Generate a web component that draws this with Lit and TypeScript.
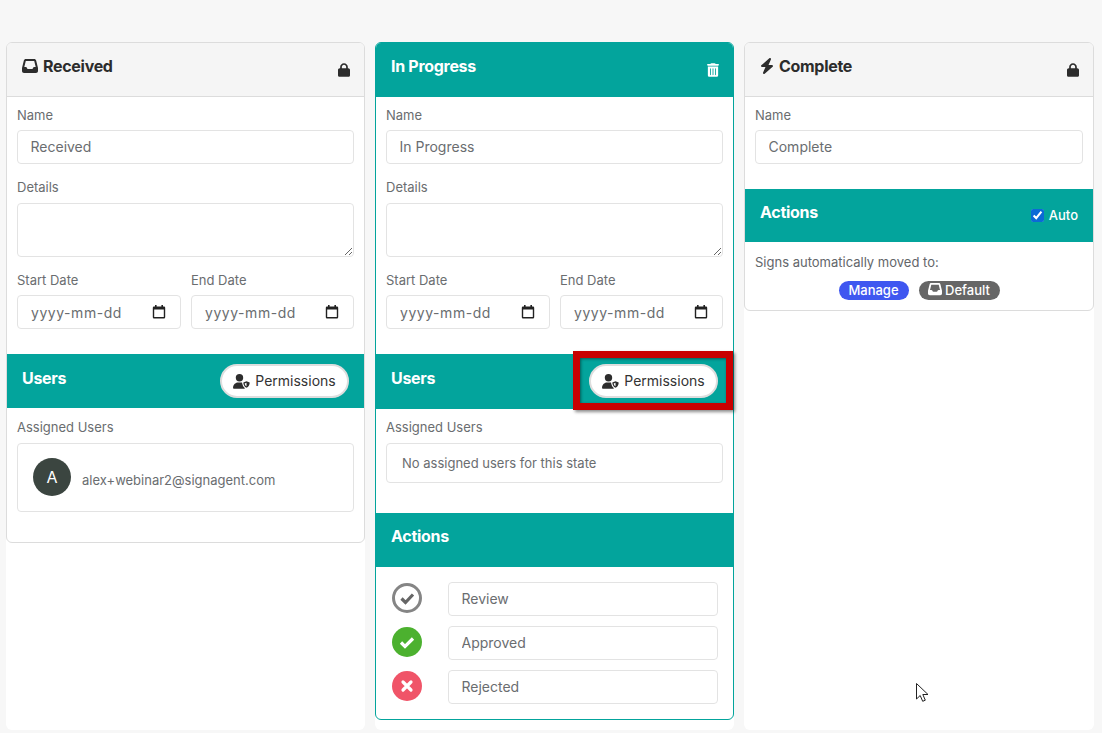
import { LitElement, html, css, svg } from "lit";
import { customElement } from "lit/decorators.js";

const inbox = svg`<path d="M121 32C91.6 32 66 52 58.9 80.5L1.9 308.4C.6 313.5 0 318.7 0 323.9V416c0 35.3 28.7 64 64 64H448c35.3 0 64-28.7 64-64V323.9c0-5.2-.6-10.4-1.9-15.5l-57-227.9C446 52 420.4 32 391 32H121zm0 64H391l48 192H387.8c-12.1 0-23.2 6.8-28.6 17.7l-14.3 28.6c-5.4 10.8-16.5 17.7-28.6 17.7H195.8c-12.1 0-23.2-6.8-28.6-17.7l-14.3-28.6c-5.4-10.8-16.5-17.7-28.6-17.7H73L121 96z"/>`;
const inboxIcon = (cls: string) => html`<svg class=${cls} viewBox="0 0 512 512" fill="currentColor">${inbox}</svg>`;
const lockIcon = html`<svg class="end-icon" viewBox="0 0 448 512" fill="currentColor"><path d="M144 144v48H304V144c0-44.2-35.8-80-80-80s-80 35.8-80 80zM80 192V144C80 64.5 144.5 0 224 0s144 64.5 144 144v48h16c35.3 0 64 28.7 64 64V448c0 35.3-28.7 64-64 64H64c-35.3 0-64-28.7-64-64V256c0-35.3 28.7-64 64-64H80z"/></svg>`;
const trashIcon = html`<svg class="end-icon" viewBox="0 0 448 512" fill="currentColor"><path d="M135.2 17.7C140.6 6.8 151.7 0 163.8 0H284.2c12.1 0 23.2 6.8 28.6 17.7L320 32h96c17.7 0 32 14.3 32 32s-14.3 32-32 32H32C14.3 96 0 81.7 0 64S14.3 32 32 32h96l7.2-14.3zM32 128H416V448c0 35.3-28.7 64-64 64H96c-35.3 0-64-28.7-64-64V128zm96 64c-8.8 0-16 7.2-16 16V432c0 8.8 7.2 16 16 16s16-7.2 16-16V208c0-8.8-7.2-16-16-16zm96 0c-8.8 0-16 7.2-16 16V432c0 8.8 7.2 16 16 16s16-7.2 16-16V208c0-8.8-7.2-16-16-16zm96 0c-8.8 0-16 7.2-16 16V432c0 8.8 7.2 16 16 16s16-7.2 16-16V208c0-8.8-7.2-16-16-16z"/></svg>`;
const boltIcon = html`<svg class="title-icon bolt" viewBox="0 0 448 512" fill="currentColor"><path d="M349.4 44.6c5.9-13.7 1.5-29.7-10.6-38.5s-28.6-8-39.9 1.8l-256 224c-10 8.8-13.6 22.9-8.9 35.3S50.7 288 64 288H175.5L98.6 467.4c-5.9 13.7-1.5 29.7 10.6 38.5s28.6 8 39.9-1.8l256-224c10-8.8 13.6-22.9 8.9-35.3s-16.6-20.7-30-20.7H272.5L349.4 44.6z"/></svg>`;
const calIcon = html`<svg class="cal" viewBox="0 0 14 14"><path fill="#222" d="M3 0h1.6v1.5h4.8V0H11v1.5h1a1.2 1.2 0 0 1 1.2 1.2v9.6A1.2 1.2 0 0 1 12 13.5H2A1.2 1.2 0 0 1 .8 12.300V2.700A1.200 1.200 0 0 1 2 1.500h1zM2.200 4.600v7.500h9.600V4.600z"/></svg>`;
const userShield = html`<svg class="ushield" viewBox="0 0 18 15"><circle cx="6.500" cy="3.800" r="3.700" fill="#2d2d2d"/><path fill="#2d2d2d" d="M0 14c0-3.300 2.200-5.600 5-5.600h3c1.500 0 2.800.6 3.700 1.600v4.800H1c-.6 0-1-.3-1-.8z"/><path fill="#fff" d="M13.500 6l4.500 1.600c0 3.600-1.500 6.300-4.500 7.400-3-1.100-4.500-3.800-4.500-7.400z"/><path fill="#2d2d2d" d="M13.500 7.300l3.200 1.100c-.1 2.600-1.200 4.400-3.200 5.300-2-.9-3.100-2.700-3.200-5.300z"/><path fill="#fff" d="M13.500 8.700v3.600c-1-.6-1.600-1.600-1.800-2.900z"/></svg>`;

@customElement("app-root")
export class AppRoot extends LitElement {
  static styles = css`
    :host { display: block; background: #f7f7f7; height: 733px; overflow: hidden; font-family: Inter, "Liberation Sans", sans-serif; color: #6a6d70; position: relative; }
    * { box-sizing: border-box; }
    .board { display: grid; grid-template-columns: 359px 359px 350px; gap: 10px; padding: 42px 0 0 6px; }
    .column { background: #fff; height: 688px; border-radius: 6px; }
    .card { border: 1px solid #dcdcdc; border-radius: 6px; background: #fff; overflow: hidden; }
    .card.active { border-color: #03a49c; }
    .card.one { height: 501px; }
    .card.two { height: 678px; }
    .card.three { height: 269px; }
    .head { height: 54px; background: #f5f5f5; border-bottom: 1px solid #dcdcdc; display: flex; justify-content: space-between; padding: 0 14px 0 15px; color: #2c2c2c; }
    .head .title { padding-top: 13px; }
    .active .head { background: #03a49c; color: #fff; border-bottom: 0; }
    .title { font-size: 16px; font-weight: 700; letter-spacing: -0.3px; line-height: 20px; padding-top: 14px; display: flex; align-items: flex-start; gap: 5px; }
    .title-icon { width: 16px; height: 16px; margin-top: 2px; }
    .bolt { width: 14px; }
    .end-icon { width: 12px; height: 14px; margin-top: 20px; }
    .body { padding: 8px 10px 0; }
    label, .label { display: block; font-size: 13px; line-height: 20px; margin-bottom: 5px; color: #6a6d70; }
    .label.wide { margin-bottom: 6px; }
    .input { display: block; width: 100%; height: 34px; border: 1px solid #e3e3e3; border-radius: 4px; background: #fff; padding: 0 12px 2px 12.5px; font: 400 14px Inter, sans-serif; color: #6a6d70; margin: 0; outline: none; }
    .field { margin-bottom: 13px; }
    textarea.input { height: 54px; resize: vertical; padding: 6px 12px; }
    .dates { display: grid; grid-template-columns: 164px 163px; gap: 10px; }
    .date { display: flex; align-items: center; justify-content: space-between; padding: 0 14px 0 13px; letter-spacing: 0.55px; }
    .cal { width: 14px; height: 14px; }
    .band { background: #03a49c; color: #fff; display: flex; justify-content: space-between; padding: 0 15px; margin-top: 25px; height: 54px; }
    .active .band.users { height: 55px; }
    .band .title { padding-top: 14px; }
    .band.actions { margin-top: 30px; }
    .band.actions .title, .band.auto-band .title { padding-top: 13px; }
    .band.auto-band { margin-top: 25px; height: 53px; padding-right: 15px; }
    .pill { height: 34px; width: 129px; margin: 10px 0 0 0; padding-bottom: 2px; border-radius: 17px; border: 2px solid #dedede; background: #fff; display: flex; align-items: center; justify-content: center; gap: 4px; font-size: 14px; color: #333; }
    .ushield { width: 18px; height: 15px; margin-top: 2px; }
    .section { padding: 9px 10px 0; }
    .active .section { padding-top: 8px; }
    .box { border: 1px solid #e3e3e3; border-radius: 4px; }
    .user { height: 69px; display: flex; padding: 14px 15px 0; gap: 11px; }
    .avatar { width: 38px; height: 38px; border-radius: 50%; background: #3b4540; color: #fff; font-size: 16px; display: flex; align-items: center; justify-content: center; }
    .email { font-size: 13px; line-height: 16px; margin-top: 14px; color: #6a6d70; }
    .none { height: 40px; padding: 0 15px 1px; display: flex; align-items: center; font-size: 13px; }
    .rows { display: flex; flex-direction: column; gap: 10px; padding: 15px 15px 0 16px; }
    .row { display: flex; align-items: flex-start; gap: 26px; }
    .row .input { width: 270px; }
    .row svg { width: 30px; height: 30px; margin-top: 1px; flex: none; }
    .auto { display: flex; align-items: center; gap: 5px; font-size: 13px; font-weight: 500; height: 14px; margin-top: 19px; }
    .auto input { width: 13px; height: 13px; margin: 0; accent-color: #0b6ad6; }
    .note { font-size: 13px; line-height: 20px; padding: 10px 10px 0; color: #63666a; }
    .badges { display: flex; justify-content: center; gap: 10px; margin-top: 9px; }
    .badge { height: 19px; padding-bottom: 1px; border-radius: 10px; color: #fff; font-size: 13px; font-weight: 500; display: flex; align-items: center; justify-content: center; gap: 3px; }
    .badge.manage { width: 70px; background: #3f57f0; }
    .badge.default { width: 81px; background: #666; }
    .badge svg { width: 14px; height: 14px; margin-top: -2px; }
    .callout { position: absolute; left: 573px; top: 351px; width: 160px; height: 59px; border: 7px solid #c80000; box-shadow: 2px 2px 3px rgba(0,0,0,.45), inset 1px 1px 3px rgba(0,0,0,.45); pointer-events: none; }
    .cursor { position: absolute; left: 916px; top: 683px; width: 13px; height: 19px; }
  `;

  private pill() {
    return html`<div class="pill">${userShield}<span>Permissions</span></div>`;
  }

  private common(name: string) {
    return html`
      <div class="field"><label>Name</label><input class="input" .value=${name} /></div>
      <div class="field"><label class="label wide">Details</label><textarea class="input"></textarea></div>
      <div class="dates">
        <div><label>Start Date</label><div class="input date"><span>yyyy-mm-dd</span>${calIcon}</div></div>
        <div><label>End Date</label><div class="input date"><span>yyyy-mm-dd</span>${calIcon}</div></div>
      </div>`;
  }

  render() {
    return html`
      <div class="board">
        <div class="column">
          <div class="card one">
            <div class="head"><div class="title">${inboxIcon("title-icon")}Received</div>${lockIcon}</div>
            <div class="body">${this.common("Received")}</div>
            <div class="band users"><div class="title">Users</div>${this.pill()}</div>
            <div class="section">
              <label class="label wide">Assigned Users</label>
              <div class="box user"><div class="avatar">A</div><div class="email">alex+webinar2@signagent.com</div></div>
            </div>
          </div>
        </div>
        <div class="column">
          <div class="card two active">
            <div class="head"><div class="title">In Progress</div>${trashIcon}</div>
            <div class="body">${this.common("In Progress")}</div>
            <div class="band users"><div class="title">Users</div>${this.pill()}</div>
            <div class="section">
              <label class="label wide">Assigned Users</label>
              <div class="box none">No assigned users for this state</div>
            </div>
            <div class="band actions"><div class="title">Actions</div></div>
            <div class="rows">
              <div class="row">
                <svg viewBox="0 0 30 30"><circle cx="15" cy="15" r="13.500" fill="#fff" stroke="#858585" stroke-width="3"/><path d="M9.500 15.500l4 4 7.500-8" fill="none" stroke="#666" stroke-width="3.200"/></svg>
                <input class="input" value="Review" />
              </div>
              <div class="row">
                <svg viewBox="0 0 30 30"><circle cx="15" cy="15" r="15" fill="#4cb12f"/><path d="M9 15.500l4 4 8-8" fill="none" stroke="#fff" stroke-width="3.200"/></svg>
                <input class="input" value="Approved" />
              </div>
              <div class="row">
                <svg viewBox="0 0 30 30"><circle cx="15" cy="15" r="15" fill="#f05468"/><path d="M11 11l8 8m0-8l-8 8" fill="none" stroke="#fff" stroke-width="3.200" stroke-linecap="round"/></svg>
                <input class="input" value="Rejected" />
              </div>
            </div>
          </div>
        </div>
        <div class="column">
          <div class="card three">
            <div class="head"><div class="title">${boltIcon}Complete</div>${lockIcon}</div>
            <div class="body"><label>Name</label><input class="input" value="Complete" /></div>
            <div class="band auto-band">
              <div class="title">Actions</div>
              <div class="auto"><input type="checkbox" checked /><span>Auto</span></div>
            </div>
            <div class="note">Signs automatically moved to:</div>
            <div class="badges">
              <div class="badge manage">Manage</div>
              <div class="badge default">${inboxIcon("")}Default</div>
            </div>
          </div>
        </div>
      </div>
      <div class="callout"></div>
      <svg class="cursor" viewBox="0 0 13 19"><path d="M.5.500v15.500l3.700-3.500 2.500 5.800 2.600-1.100-2.500-5.700h5.200z" fill="#fff" stroke="#222" stroke-width="1"/></svg>
    `;
  }
}
